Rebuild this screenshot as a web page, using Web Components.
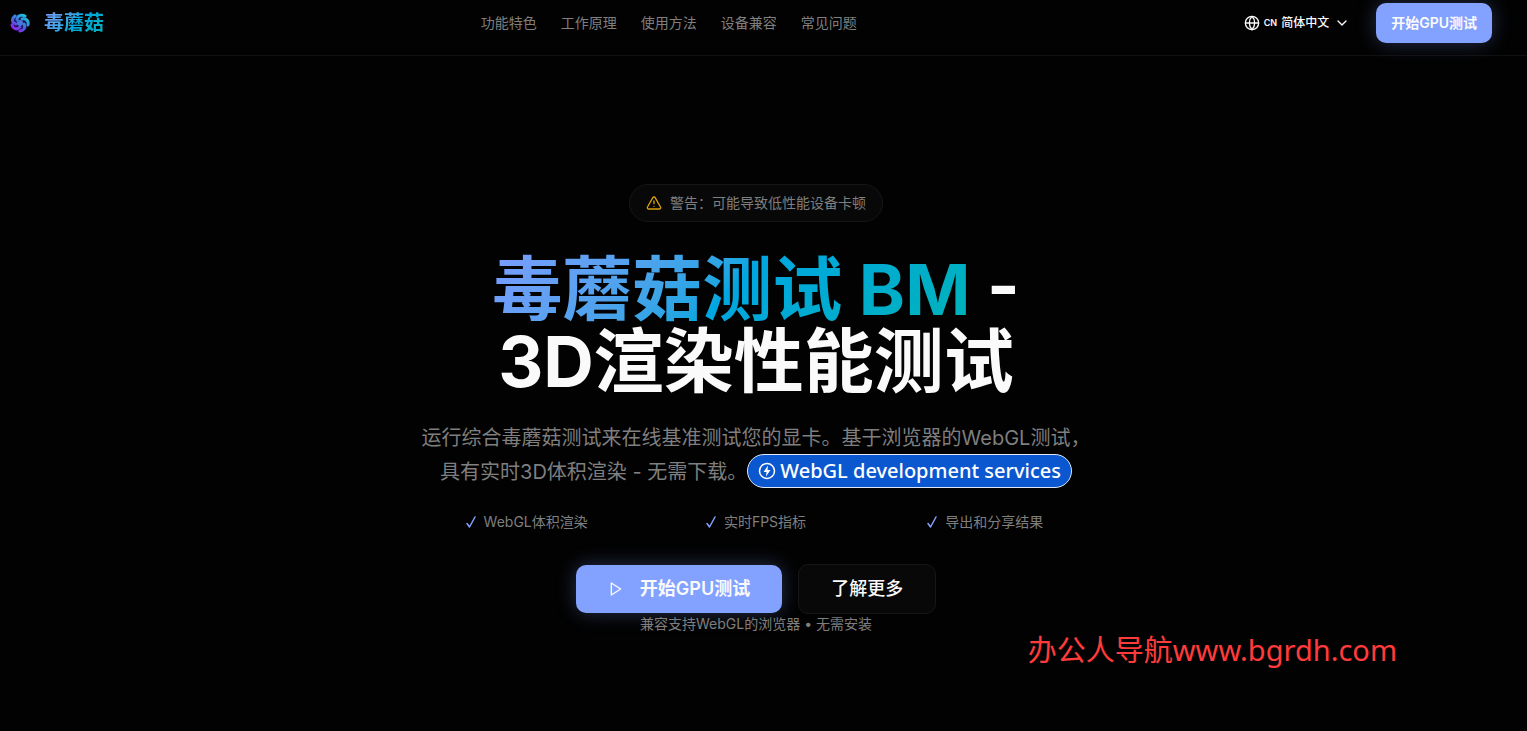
<!DOCTYPE html>
<html lang="zh-CN">
<head>
    <meta charset="UTF-8">
    <meta name="viewport" content="width=device-width, initial-scale=1.0">
    <title>毒蘑菇测试 BM</title>
    <style>
        :root {
            --bg: #020202;
            --fg: #fafafa;
            --muted: #7f7f7f;
            --primary: #83a2ff;
            --surface: #080808;
            --line: #161616;
            --brand: linear-gradient(135deg in oklab, #7c9cff 0%, #00a6e0 50%, #00b3b8 100%);
        }

        body {
            margin: 0;
            min-height: 100vh;
            background: var(--bg);
            color: var(--fg);
            font-family: Inter, "Noto Sans CJK SC", sans-serif;
            font-size: 14px;
            line-height: 20px;
        }
    </style>
</head>
<body>
    <site-header>
        <site-logo slot="logo">毒蘑菇</site-logo>
        <nav-link href="#features">功能特色</nav-link>
        <nav-link href="#how">工作原理</nav-link>
        <nav-link href="#usage">使用方法</nav-link>
        <nav-link href="#devices">设备兼容</nav-link>
        <nav-link href="#faq">常见问题</nav-link>
        <language-picker slot="actions"></language-picker>
        <app-button slot="actions" variant="primary">开始GPU测试</app-button>
    </site-header>

    <hero-section>
        <warning-chip slot="chip">警告：可能导致低性能设备卡顿</warning-chip>
        <span slot="accent">毒蘑菇测试 BM</span>
        <span slot="title">3D渲染性能测试</span>
        <span slot="description">运行综合毒蘑菇测试来在线基准测试您的显卡。基于浏览器的WebGL测试，具有实时3D体积渲染 - 无需下载。</span>
        <service-link slot="service" href="#services">WebGL development services</service-link>
        <feature-item slot="features">WebGL体积渲染</feature-item>
        <feature-item slot="features">实时FPS指标</feature-item>
        <feature-item slot="features">导出和分享结果</feature-item>
        <app-button slot="buttons" variant="primary" size="large" icon="play">开始GPU测试</app-button>
        <app-button slot="buttons" variant="outline" size="large">了解更多</app-button>
        <span slot="note">兼容支持WebGL的浏览器 • 无需安装</span>
    </hero-section>

    <water-mark>办公人导航www.bgrdh.com</water-mark>

    <script>
        // Crea el shadow root a partir d'una plantilla
        function render(element, html) {
            const shadow = element.attachShadow({ mode: 'open' });
            const template = document.createElement('template');
            template.innerHTML = html;
            shadow.appendChild(template.content.cloneNode(true));
            return shadow;
        }

        class SiteHeader extends HTMLElement {
            constructor() {
                super();
                render(this, `
                    <style>
                        :host {
                            display: block;
                            border-bottom: 1px solid #111;
                        }

                        header {
                            display: flex;
                            align-items: center;
                            justify-content: space-between;
                            padding: 3px 35px 12px 8px;
                        }

                        nav, .actions {
                            display: flex;
                            align-items: center;
                            gap: 24px;
                        }
                    </style>
                    <header>
                        <slot name="logo"></slot>
                        <nav><slot></slot></nav>
                        <div class="actions"><slot name="actions"></slot></div>
                    </header>
                `);
            }
        }

        class SiteLogo extends HTMLElement {
            constructor() {
                super();
                render(this, `
                    <style>
                        :host {
                            display: block;
                        }

                        a {
                            display: flex;
                            align-items: center;
                            gap: 12px;
                            color: inherit;
                            text-decoration: none;
                        }

                        span {
                            background: var(--brand);
                            background-clip: text;
                            -webkit-background-clip: text;
                            color: transparent;
                            font-size: 20px;
                            font-weight: 700;
                            line-height: 28px;
                        }
                    </style>
                    <a href="#">
                        <svg width="24" height="24" viewBox="0 0 24 24" fill="none" aria-hidden="true">
                            <defs>
                                <linearGradient id="swirl" gradientUnits="userSpaceOnUse" x1="5" y1="20" x2="17" y2="4">
                                    <stop offset="0" stop-color="#b010f0"/>
                                    <stop offset="0.45" stop-color="#4a60e0"/>
                                    <stop offset="1" stop-color="#16c8d8"/>
                                </linearGradient>
                            </defs>
                            <circle cx="12" cy="12" r="9" fill="#17124a"/>
                            <circle cx="12" cy="12" r="3" fill="#4a78d8"/>
                            <g stroke="url(#swirl)" stroke-width="3" stroke-linecap="round">
                                <path d="M9 9C9 5 13 3 17 5"/>
                                <path d="M14 8C18 7 21 10 20 14"/>
                                <path d="M16 13C18 17 15 20 12 20"/>
                                <path d="M12 16C9 19 5 18 4 14"/>
                                <path d="M8 13C4 12 3 8 7 5"/>
                            </g>
                        </svg>
                        <span><slot></slot></span>
                    </a>
                `);
            }
        }

        class NavLink extends HTMLElement {
            constructor() {
                super();
                const shadow = render(this, `
                    <style>
                        :host {
                            display: block;
                        }

                        a {
                            color: var(--muted);
                            text-decoration: none;
                        }

                        a:hover {
                            color: var(--fg);
                        }
                    </style>
                    <a><slot></slot></a>
                `);
                shadow.querySelector('a').href = this.getAttribute('href');
            }
        }

        class LanguagePicker extends HTMLElement {
            constructor() {
                super();
                render(this, `
                    <style>
                        :host {
                            display: block;
                        }

                        label {
                            display: flex;
                            align-items: center;
                            gap: 4px;
                            padding: 0 2px 0 10px;
                            font-size: 12px;
                            font-weight: 500;
                        }

                        .code {
                            font-size: 9px;
                            font-weight: 600;
                        }

                        select {
                            appearance: none;
                            margin: 0;
                            padding: 0;
                            border: 0;
                            background: transparent;
                            color: inherit;
                            font: inherit;
                        }
                    </style>
                    <label>
                        <svg width="16" height="16" viewBox="0 0 24 24" fill="none" stroke="currentColor" stroke-width="2" aria-hidden="true">
                            <circle cx="12" cy="12" r="10"/>
                            <path d="M12 2a14.5 14.5 0 0 0 0 20 14.5 14.5 0 0 0 0-20M2 12h20"/>
                        </svg>
                        <span class="code">CN</span>
                        <select>
                            <option>简体中文</option>
                        </select>
                        <svg width="16" height="16" viewBox="0 0 24 24" fill="none" stroke="currentColor" stroke-width="2" stroke-linecap="round" stroke-linejoin="round" aria-hidden="true">
                            <path d="m6 9 6 6 6-6"/>
                        </svg>
                    </label>
                `);
            }
        }

        class AppButton extends HTMLElement {
            constructor() {
                super();
                const play = `
                    <svg width="16" height="16" viewBox="0 0 24 24" fill="none" stroke="currentColor" stroke-width="2" stroke-linejoin="round" aria-hidden="true">
                        <path d="M5 3 19 12 5 21Z"/>
                    </svg>
                `;
                render(this, `
                    <style>
                        :host {
                            display: block;
                        }

                        button {
                            display: flex;
                            align-items: center;
                            gap: 16px;
                            height: 40px;
                            padding: 0 15px;
                            border: 0;
                            border-radius: 10px;
                            color: var(--fg);
                            font: inherit;
                            font-weight: 600;
                            white-space: nowrap;
                            cursor: pointer;
                        }

                        :host([variant="primary"]) button {
                            background: var(--primary);
                            box-shadow: 0 0 20px rgba(131, 162, 255, 0.3);
                        }

                        :host([variant="outline"]) button {
                            box-sizing: content-box;
                            border: 1px solid var(--line);
                            background: var(--surface);
                            font-weight: 500;
                        }

                        :host([size="large"]) button {
                            height: 48px;
                            padding: 0 32px;
                            font-size: 18px;
                        }
                    </style>
                    <button type="button">
                        ${this.getAttribute('icon') === 'play' ? play : ''}
                        <slot></slot>
                    </button>
                `);
            }
        }

        class HeroSection extends HTMLElement {
            constructor() {
                super();
                render(this, `
                    <style>
                        :host {
                            display: block;
                        }

                        section {
                            display: flex;
                            flex-direction: column;
                            align-items: center;
                            padding: 128px 31px 64px 16px;
                            text-align: center;
                        }

                        h1 {
                            margin: 32px 0 24px;
                            font-size: 70px;
                            font-weight: 700;
                            line-height: 72px;
                        }

                        .accent {
                            background: var(--brand);
                            background-clip: text;
                            -webkit-background-clip: text;
                            color: transparent;
                        }

                        .title {
                            display: block;
                        }

                        .description {
                            max-width: 672px;
                            margin: 0 0 24px;
                            color: var(--muted);
                            font-size: 20px;
                            line-height: 32px;
                        }

                        .features {
                            display: grid;
                            grid-template-columns: repeat(3, 1fr);
                            gap: 16px;
                            width: 100%;
                            max-width: 672px;
                            margin-bottom: 32px;
                        }

                        .buttons {
                            display: flex;
                            align-items: center;
                            gap: 16px;
                        }

                        .note {
                            margin: 0;
                            color: var(--muted);
                        }
                    </style>
                    <section>
                        <slot name="chip"></slot>
                        <h1>
                            <span class="accent"><slot name="accent"></slot></span> -
                            <span class="title"><slot name="title"></slot></span>
                        </h1>
                        <p class="description"><slot name="description"></slot><slot name="service"></slot></p>
                        <div class="features"><slot name="features"></slot></div>
                        <div class="buttons"><slot name="buttons"></slot></div>
                        <p class="note"><slot name="note"></slot></p>
                    </section>
                `);
            }
        }

        class WarningChip extends HTMLElement {
            constructor() {
                super();
                render(this, `
                    <style>
                        :host {
                            display: flex;
                            align-items: center;
                            gap: 8px;
                            padding: 8px 16px;
                            border: 1px solid var(--line);
                            border-radius: 20px;
                            background: var(--surface);
                            color: var(--muted);
                        }

                        svg {
                            color: #d9a009;
                        }
                    </style>
                    <svg width="16" height="16" viewBox="0 0 24 24" fill="none" stroke="currentColor" stroke-width="2" stroke-linecap="round" stroke-linejoin="round" aria-hidden="true">
                        <path d="m21.73 18-8-14a2 2 0 0 0-3.48 0l-8 14A2 2 0 0 0 4 21h16a2 2 0 0 0 1.73-3"/>
                        <path d="M12 9v4M12 17h.01"/>
                    </svg>
                    <slot></slot>
                `);
            }
        }

        class ServiceLink extends HTMLElement {
            constructor() {
                super();
                const shadow = render(this, `
                    <style>
                        :host {
                            display: inline-block;
                            vertical-align: bottom;
                        }

                        a {
                            display: flex;
                            align-items: center;
                            gap: 4px;
                            padding: 0 10px;
                            border: 1px solid #dfe6f5;
                            border-radius: 17px;
                            background: #0b57d0;
                            color: #fff;
                            font-family: "Noto Sans", sans-serif;
                            font-weight: 500;
                            line-height: 32px;
                            text-decoration: none;
                            white-space: nowrap;
                        }
                    </style>
                    <a>
                        <svg width="18" height="18" viewBox="0 0 18 18" fill="none" aria-hidden="true">
                            <circle cx="9" cy="9" r="7.5" stroke="currentColor" stroke-width="1.5"/>
                            <path d="M10 3.5 5.5 10H8.5L8 14.5 12.5 8H9.5Z" fill="currentColor"/>
                        </svg>
                        <slot></slot>
                    </a>
                `);
                shadow.querySelector('a').href = this.getAttribute('href');
            }
        }

        class FeatureItem extends HTMLElement {
            constructor() {
                super();
                render(this, `
                    <style>
                        :host {
                            display: flex;
                            align-items: center;
                            justify-content: center;
                            gap: 8px;
                            color: var(--muted);
                        }

                        svg {
                            color: var(--primary);
                        }
                    </style>
                    <svg width="10" height="12" viewBox="0 0 10 12" fill="none" stroke="currentColor" stroke-width="1.5" stroke-linecap="round" stroke-linejoin="round" aria-hidden="true">
                        <path d="M1 7.5 3.5 11 9 1"/>
                    </svg>
                    <slot></slot>
                `);
            }
        }

        class WaterMark extends HTMLElement {
            constructor() {
                super();
                render(this, `
                    <style>
                        :host {
                            position: absolute;
                            right: 130px;
                            top: 630px;
                            color: #ff3b3b;
                            font-family: "Noto Sans", "Noto Sans CJK SC", sans-serif;
                            font-size: 29px;
                            line-height: 40px;
                            white-space: nowrap;
                        }
                    </style>
                    <slot></slot>
                `);
            }
        }

        customElements.define('site-header', SiteHeader);
        customElements.define('site-logo', SiteLogo);
        customElements.define('nav-link', NavLink);
        customElements.define('language-picker', LanguagePicker);
        customElements.define('app-button', AppButton);
        customElements.define('hero-section', HeroSection);
        customElements.define('warning-chip', WarningChip);
        customElements.define('service-link', ServiceLink);
        customElements.define('feature-item', FeatureItem);
        customElements.define('water-mark', WaterMark);
    </script>
</body>
</html>
